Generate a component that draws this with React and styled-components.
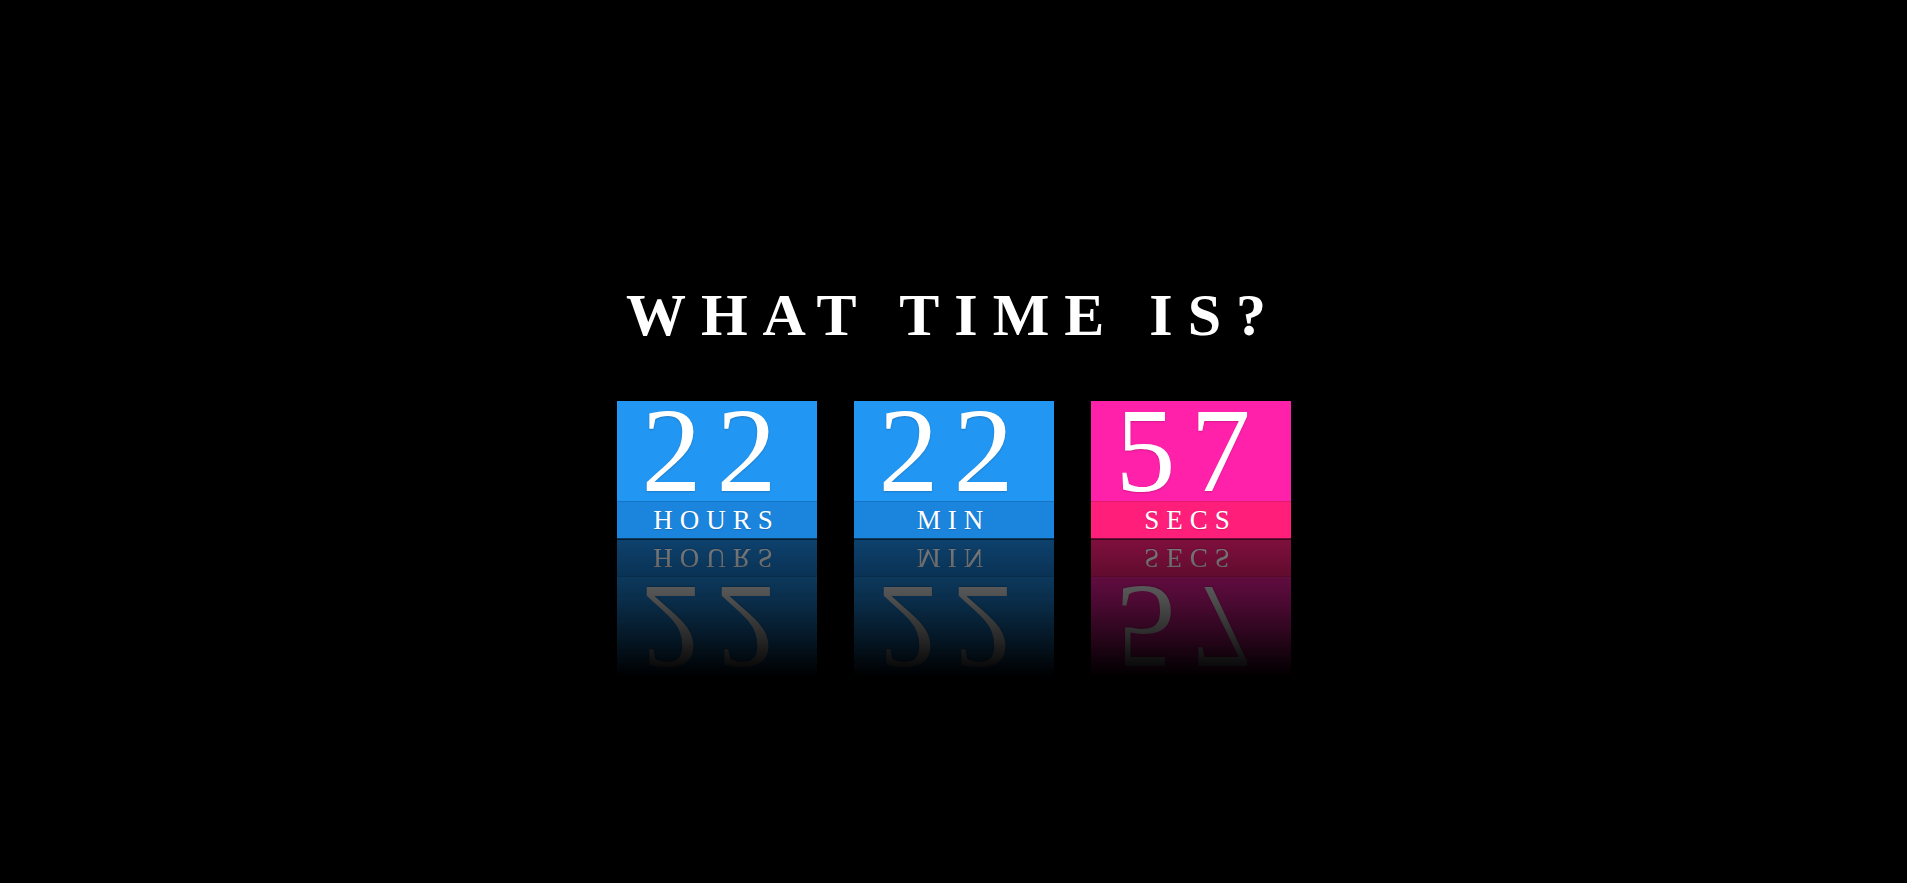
import React from 'react';
import styled, { createGlobalStyle } from 'styled-components';

const GlobalStyle = createGlobalStyle`
    html, body {
        margin: 0;
        padding: 0;
        background: #000;
    }
    * {
        box-sizing: border-box;
    }
`;

const Page = styled.main`
    min-height: 100vh;
    background: #000;
    display: flex;
    flex-direction: column;
    align-items: center;
    padding-top: 285px;
    font-family: "Liberation Serif", "Times New Roman", serif;
    color: #fff;
`;

const Title = styled.h1`
    margin: 0;
    font-size: 60px;
    line-height: 60px;
    font-weight: 700;
    letter-spacing: 15px;
    text-transform: uppercase;
`;

const Row = styled.div`
    display: flex;
    gap: 37px;
    margin-top: 56px;
`;

const Unit = styled.div`
    width: 200px;
    display: flex;
    flex-direction: column;
`;

const Face = styled.div`
    display: flex;
    flex-direction: column;
`;

const Number = styled.div`
    height: 100px;
    background: ${({ $main }) => $main};
    font-size: 120px;
    line-height: 100px;
    letter-spacing: 15px;
    text-align: center;
    text-shadow: 0 1px 2px rgba(0, 0, 0, 0.18);
    overflow: hidden;
`;

const Label = styled.div`
    height: 38px;
    background: ${({ $shade }) => $shade};
    border-top: 1px solid rgba(0, 0, 0, 0.12);
    border-bottom: 1px solid rgba(0, 0, 0, 0.55);
    font-size: 27px;
    line-height: 36px;
    letter-spacing: 7px;
    text-align: center;
    text-transform: uppercase;
    text-shadow: 0 1px 1px rgba(0, 0, 0, 0.15);
`;

const Reflection = styled.div`
    opacity: 0.5;
    -webkit-mask-image: linear-gradient(to bottom, #000 0%, rgba(0, 0, 0, 0.6) 45%, transparent 100%);
    mask-image: linear-gradient(to bottom, #000 0%, rgba(0, 0, 0, 0.6) 45%, transparent 100%);

    & > div {
        transform: scaleY(-1);
    }
`;

const units = [
    { value: '22', label: 'Hours', main: '#2196f3', shade: '#1b84dc' },
    { value: '22', label: 'Min', main: '#2196f3', shade: '#1b84dc' },
    { value: '57', label: 'Secs', main: '#ff21aa', shade: '#ff1f7b' },
];

function Card({ value, label, main, shade }) {
    return (
        <Face>
            <Number $main={main}>{value}</Number>
            <Label $shade={shade}>{label}</Label>
        </Face>
    );
}

export default function App() {
    return (
        <>
            <GlobalStyle />
            <Page>
                <Title>What time is?</Title>
                <Row>
                    {units.map((u) => (
                        <Unit key={u.label}>
                            <Card {...u} />
                            <Reflection aria-hidden="true">
                                <Card {...u} />
                            </Reflection>
                        </Unit>
                    ))}
                </Row>
            </Page>
        </>
    );
}
